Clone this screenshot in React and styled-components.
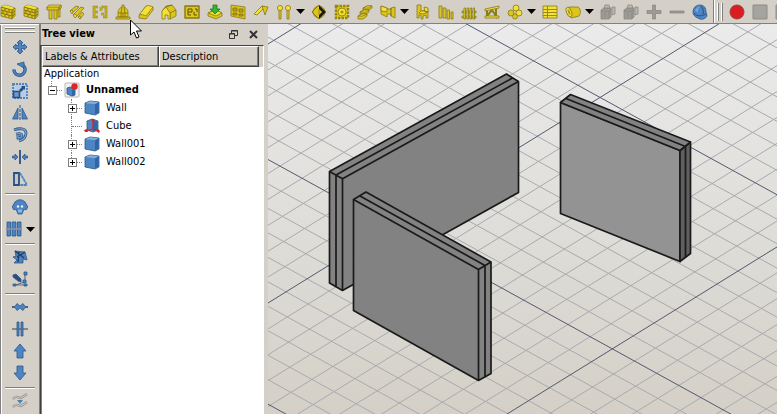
import React, { useState } from "react";
import styled, { createGlobalStyle } from "styled-components";

const GlobalStyle = createGlobalStyle`
  * {
    box-sizing: border-box;
  }

  body {
    margin: 0;
    background: #d4d0c8;
    color: #000;
    font-family: "DejaVu Sans Condensed", "DejaVu Sans", sans-serif;
    font-size: 11px;
    line-height: 14px;
  }
`;

const Y = { fill: "#dfc51a", stroke: "#85781c", strokeWidth: 0.8, strokeLinejoin: "round" };
const L = { fill: "#f4e134", stroke: "#85781c", strokeWidth: 0.8, strokeLinejoin: "round" };
const B = { fill: "#4c84c4", stroke: "#2f5687", strokeWidth: 0.8, strokeLinejoin: "round" };
const G = { fill: "#9d9b95", stroke: "#8b8984", strokeWidth: 0.8, strokeLinejoin: "round" };

const bricks = (
  <>
    <path {...Y} d="M1 3l4-2 10 3v8l-3 3-11-3z" />
    <path fill="#f4e134" d="M1 3l4-2 10 3-3 2z" />
    <path fill="#c4ab12" d="M12 6l3-2v8l-3 3z" />
    <path fill="none" stroke="#7b6e12" strokeWidth="0.9" d="M1 3l11 3v9M12 6l3-2M1 6l11 3 3-2M1 9l11 3 3-2M5 4v3M9 5v3M3 6.500v3M7 8v3M5 10v3M9 11v3" />
  </>
);

const machine = (
  <>
    <path {...G} d="M1 6l3-2h7v9l-2 2H1z" />
    <path {...G} fill="#b9b7b0" d="M4 4l1-3h4l1 3zM12 3h3v7l-3 1z" />
    <path {...G} fill="none" d="M1 7h8v7M9 7l2-2M5 8v5" />
  </>
);

// all drawings sit on a 16x16 board
const drawings = {
  bricks,
  structure: (
    <>
      <path {...Y} d="M3 5h3v10H3zM8 5h3v10H8zM12 4h2v9h-2z" />
      <path {...L} d="M1 3l2-2h12v3l-2 1H1z" />
      <path {...Y} d="M1 3h12v3H1zM13 3l2-2v3l-2 2z" />
    </>
  ),
  rebar: (
    <>
      <path {...Y} d="M1 7l6-5 3 1-7 6zM4 11l8-8 3 1-8 9zM9 13l4-5 2 2-4 5z" />
      <path {...L} d="M1 7l2-1 1 2-1 2zM4 11l2-1 2 2-2 2zM9 13l2-1 1 2-1 1z" />
    </>
  ),
  floor: (
    <>
      <path fill="none" stroke="#8b7d1c" strokeWidth="2.600" d="M6 3H2v10h4M2 8h4M9 3h5v10h-3M9 3v4M9 10h3" />
      <path fill="none" stroke="#dfc51a" strokeWidth="1.200" d="M6 3H2v10h4M2 8h4M9 3h5v10h-3M9 3v4M9 10h3" />
    </>
  ),
  building: (
    <>
      <path {...Y} d="M1 13h14v2H1zM3 9c0-4 2-5 4-6V1h2v2c2 1 4 2 4 6v4H3z" />
      <path stroke="#7b6e12" fill="none" strokeWidth="0.800" d="M3 9h10M6 13V9l1-6M10 13V9L9 3M8 9v4" />
    </>
  ),
  slab: (
    <>
      <path {...Y} d="M1 12l7-10 7 1v3l-7 9-7-1z" />
      <path {...L} d="M1 11l7-9c2-1 5 0 7 1l-7 9c-2-1-5-2-7-1z" />
    </>
  ),
  house: (
    <>
      <path {...Y} d="M1 7l4-5 6-1 4 5v6l-6 3V9L5 4z" />
      <path {...L} d="M1 7l4-4 4 6v6H7v-4H4v4H1z" />
      <path stroke="#7b6e12" fill="none" strokeWidth="0.800" d="M5 3l6-2M9 9l6-3" />
    </>
  ),
  plan: (
    <>
      <path {...Y} d="M1 2h14v12H1z" strokeWidth="1.400" />
      <path stroke="#5c5108" fill="none" d="M4 5h4M4 8h4M4 5v6h3M8 5v3M10 8v3h3M11 5h2v3" />
    </>
  ),
  importBox: (
    <>
      <path {...Y} d="M1 9l4-2h6l4 2v3l-6 3-8-3z" />
      <path {...L} d="M1 9l5-2h5l4 2-6 3z" />
      <path fill="#38b530" stroke="#1d7a18" strokeWidth="0.800" d="M6 1h4v4h3L8 10 3 5h3z" />
    </>
  ),
  panelWall: (
    <>
      <path {...Y} d="M1 1l14 2v12L1 12z" />
      <path stroke="#7b6e12" strokeWidth="0.800" fill="#b9a51c" d="M3 4h4v3H3zM9 5h4v3H9zM3 9h4v2H3zM9 10h4v2H9z" />
    </>
  ),
  roof: (
    <>
      <path {...L} d="M1 10l8-8 3 1-8 8z" />
      <path {...Y} d="M9 2l6 1-3 8-2-6z" />
    </>
  ),
  pins: (
    <>
      <path {...Y} d="M3 6h2v9H3zM11 6h2v9h-2z" />
      <circle {...L} cx="4" cy="4" r="2.600" />
      <circle {...L} cx="12" cy="4" r="2.600" />
    </>
  ),
  section: (
    <>
      <circle {...Y} cx="8" cy="8" r="6" />
      <path fill="#1c1a08" d="M8 1l7 7-7 7z" />
      <path {...Y} d="M8 5l3 3-3 3z" />
      <path fill="none" stroke="#7b6e12" strokeWidth="0.800" d="M8 1L1 8l7 7" />
    </>
  ),
  gear: (
    <>
      <rect x="2" y="2" width="12" height="12" fill="#e3cb14" stroke="#93841c" strokeWidth="2.500" strokeDasharray="2.500 1" />
      <circle cx="8" cy="8" r="4" {...L} />
      <circle cx="8" cy="8" r="1.500" fill="#a38f08" />
    </>
  ),
  stairs: (
    <>
      <path {...Y} d="M1 12l4-2h5v2l-4 3H1zM3 8l4-2h5v2l-3 2H3zM6 4l4-2h5v2l-3 2H6z" />
      <path {...L} d="M1 12l4-2h5l-4 2zM3 8l4-2h5l-3 2zM6 4l4-2h5l-3 2z" />
    </>
  ),
  panel: (
    <>
      <path {...Y} d="M1 2l6 2v1h4V4l4-1v11l-4-2v-2H7v3l-6-3z" />
      <path {...L} d="M1 2l6 2v4L1 7z" />
      <path stroke="#7b6e12" d="M11 4v8" />
    </>
  ),
  chair: (
    <>
      <path {...Y} d="M2 1h4v6l7-1v8h-2v-3l-3 1v3H6v-4H4v3H2z" />
      <path {...L} d="M6 7h4l3 1-5 2-4-1zM9 3l4 1v4h-3z" />
    </>
  ),
  columns: (
    <path {...Y} d="M1 2h3v12H1zM5 4h3v10H5zM9 6h2.500v9H9zM13 8h2v7h-2z" />
  ),
  fence: (
    <>
      <path {...Y} d="M1 7h14v2H1zM1 12h14v2H1z" />
      <path {...L} d="M3 4h1.500v11H3zM6 4h1.500v11H6zM9 4h1.500v11H9zM12 4h1.500v11H12z" />
    </>
  ),
  truss: (
    <>
      <path fill="none" stroke="#8b7d1c" strokeWidth="2" d="M3 6v6l5-6 4 6V4" />
      <path {...L} d="M1 5l14-3v2L1 7zM1 12h14v2H1z" />
    </>
  ),
  balls: (
    <>
      <circle {...L} cx="9" cy="4" r="3" />
      <circle {...Y} cx="4" cy="9" r="3" />
      <circle {...L} cx="12" cy="9" r="3" />
      <circle {...Y} cx="8" cy="12.500" r="2.500" />
    </>
  ),
  table: (
    <>
      <path {...L} d="M1 2h14v12H1z" />
      <path stroke="#9b8a1a" fill="none" d="M1 5.500h14M1 8.500h14M1 11.500h14M5.500 2v12" />
    </>
  ),
  pipe: (
    <>
      <path {...Y} d="M4 3l9 0c3 2 3 6 1 9l-8 2z" />
      <ellipse {...L} cx="4" cy="8" rx="2.500" ry="5" transform="rotate(-20 4 8)" />
      <ellipse fill="#a99718" cx="4" cy="8" rx="1" ry="3" transform="rotate(-20 4 8)" />
    </>
  ),
  machine,
  plus: <path {...G} d="M6.500 1h3v5.500H15v3H9.500V15h-3V9.500H1v-3h5.500z" />,
  minus: <path {...G} d="M1 7h14v2H1z" />,
  helmet: (
    <>
      <path {...B} d="M1 8c0-4 3-7 7-7s6 3 6 7l1 4c-1 2-4 4-7 3s-7-3-7-7z" />
      <path fill="#78a6da" d="M3 7c1-3 3-5 5-5-2 2-2 4-2 6z" />
      <path fill="none" stroke="#2a4f80" d="M2 9c3 4 8 3 12 1M9 2c2 2 3 5 2 8" />
    </>
  ),
  record: <circle cx="8" cy="8" r="7" fill="#db1c20" stroke="#99423e" />,
  stop: <path fill="#a5a49f" stroke="#8e8c87" d="M1 1h14v14H1z" />,
  move: <path {...B} d="M8 1l3 3H9.500v2.500H12V5l3 3-3 3V9.500H9.500V12H11l-3 3-3-3h1.500V9.500H4V11L1 8l3-3v1.500h2.500V4H5z" />,
  rotate: (
    <>
      <path fill="none" stroke="#2f5687" strokeWidth="3.400" d="M2 8.500a5.500 5.500 0 1 0 8-4.700" />
      <path fill="none" stroke="#4c84c4" strokeWidth="1.800" d="M2 8.500a5.500 5.500 0 1 0 8-4.700" />
      <path {...B} d="M5 3l7-2v6z" />
    </>
  ),
  scale: (
    <>
      <path fill="#b9cbe0" stroke="#4c84c4" strokeWidth="1.800" strokeDasharray="2 1" d="M1 1h14v14H1z" />
      <path fill="#6b9bd2" stroke="#2a4f80" strokeWidth="1.600" d="M1.500 8.500h6v6h-6z" />
      <path fill="#2a4f80" d="M9 3h4v4l-1-1-3 3-2-2 3-3z" />
    </>
  ),
  mirror: (
    <>
      <path {...B} d="M6 3v11H0.500zM10 3v11h5.500z" />
      <path stroke="#3b76bb" strokeWidth="1.400" strokeDasharray="3 1" d="M8 0v16" />
    </>
  ),
  offset: (
    <>
      <path fill="none" stroke="#2f5687" strokeWidth="2.800" d="M2 3c5-2 12-2 12 3 0 4-3 7-7 8M4 7c4-1 6 0 6 1.500S8 11 6 11V8" />
      <path fill="none" stroke="#78a6da" strokeWidth="1.200" d="M2 3c5-2 12-2 12 3 0 4-3 7-7 8M4 7c4-1 6 0 6 1.500S8 11 6 11V8" />
    </>
  ),
  trim: (
    <>
      <path stroke="#2a4f80" strokeWidth="1.800" d="M8 1v14" />
      <path {...B} d="M0.500 7H3V5l3 3-3 3V9H0.500zM15.500 7H13V5l-3 3 3 3V9h2.500z" />
    </>
  ),
  stretch: (
    <>
      <path fill="#c3c8cc" stroke="#2a4f80" strokeWidth="1.800" d="M2 2h5v12H2z" />
      <path fill="none" stroke="#4c84c4" strokeWidth="1.800" strokeDasharray="3 0.500" d="M8 2l7 12H8" />
    </>
  ),
  sheep: (
    <>
      <path {...B} d="M3 3c3-3 7-3 10 0l3 5-2 3-2-1-2 5H6l-2-5-2 1-2-3z" />
      <circle cx="6" cy="7.500" r="1.200" fill="#e9f1fa" />
      <circle cx="10" cy="7.500" r="1.200" fill="#e9f1fa" />
      <path fill="#8cb5e4" d="M6 10.500h4v3H6z" />
    </>
  ),
  array: (
    <>
      <path {...B} d="M1 1h3.500v14H1zM6 1h4v14H6zM11.500 1H15v14h-3.500z" />
      <path stroke="#8c949c" strokeWidth="1.600" d="M0 8h16" />
    </>
  ),
  edit: (
    <>
      <path {...B} d="M3 2l10 1 2 8-4-1 0 4H2l3-3-4-3 3-1z" />
      <path stroke="#22405f" strokeWidth="1.400" d="M3 2l9 7M5 8l8-5M7 3L6 13" />
    </>
  ),
  sketch: (
    <>
      <path fill="none" stroke="#5f7388" strokeWidth="1.200" d="M13 3v8M13 11L3 14h11" />
      <path {...B} fill="#2e4f78" d="M1 4l3-1 5 5v3l-3-1-5-4z" />
      <path {...B} d="M12 1h3v3h-3zM11 9h3v3h-3zM1 13h3v2H1zM12 13h3v2h-3z" />
    </>
  ),
  join: <path {...B} d="M0 7.500h3l2-3 3 2.500 3-2.500 2 3h3v1h-3l-2 3L8 9l-3 2.500-2-3H0z" />,
  split: (
    <>
      <path stroke="#7a8087" strokeWidth="1.800" d="M0 8h16" />
      <path {...B} d="M5 1h2v14H5zM9 1h2v14H9z" />
    </>
  ),
  up: <path {...B} d="M8 1l6 7h-3v7H5V8H2z" />,
  down: <path {...B} d="M8 15L2 8h3V1h6v7h3z" />,
  wire: (
    <>
      <path fill="none" stroke="#8b8a86" strokeWidth="2.400" d="M1 6c4-5 6 0 8-1l6-4M1 14c4-5 6 0 8-1l6-4" />
      <path fill="none" stroke="#c4c2bb" strokeWidth="1.200" d="M1 6c4-5 6 0 8-1l6-4M1 14c4-5 6 0 8-1l6-4" />
      <path fill="#517fb5" d="M5 7h6l-3 4z" />
    </>
  ),
  document: (
    <>
      <rect x="1" y="1" width="14" height="14" rx="1" fill="#f2f2f2" stroke="#b5b5b5" />
      <path {...B} d="M3 6l3-1 5 2v6l-3 1-5-2z" />
      <path fill="#2f66a8" d="M8 8l3-1v6l-3 1z" />
      <circle cx="10.500" cy="4.500" r="3.200" fill="#df2626" />
    </>
  ),
  wall: (
    <>
      <path {...B} d="M1 3l5-2 9 1v11l-4 2-10-2z" />
      <path fill="#86b0de" d="M1.500 3.300l4.500-2 8.500 1-3.500 1.700z" />
      <path fill="#2f66a8" d="M11 4.500l3.500-2v10l-3.500 2z" />
    </>
  ),
  cube: (
    <>
      <path {...B} d="M3 3l5-2 6 2v9l-5 2-6-2z" />
      <path fill="#2f66a8" d="M9 4l4.500-1v9L9 13.500z" />
      <path fill="none" stroke="#d8222a" strokeWidth="1.300" d="M9 3v8l-7 2M9 11l5 2" />
      <path fill="#d8222a" d="M8 1h2.500v3H8zM0 12l3-1 1 3H1zM12 13l2-2 2 2-1 2z" />
    </>
  ),
};

const topTools = [
  ["bricks", "Wall"],
  ["bricks", "Curtain wall"],
  ["structure", "Structure"],
  ["rebar", "Rebar"],
  ["floor", "Floor"],
  ["building", "Building"],
  ["slab", "Project"],
  ["house", "Site"],
  ["plan", "Window"],
  ["importBox", "Import"],
  ["panelWall", "Schedule wall"],
  ["roof", "Roof"],
  ["pins", "Axis", true],
  ["section", "Section plane"],
  ["gear", "Space"],
  ["stairs", "Stairs"],
  ["panel", "Panel", true],
  ["chair", "Equipment"],
  ["columns", "Frame"],
  ["fence", "Fence"],
  ["truss", "Truss"],
  ["balls", "Material", true],
  ["table", "Schedule"],
  ["pipe", "Pipe", true],
  ["machine", "Cut plane"],
  ["machine", "Cut line"],
  ["plus", "Add"],
  ["minus", "Remove"],
  ["helmet", "Survey"],
];

const macroTools = [
  ["record", "Record macro"],
  ["stop", "Stop macro"],
  ["stop", "Macros"],
];

const sideTools = [
  [
    ["move", "Move"],
    ["rotate", "Rotate"],
    ["scale", "Scale"],
    ["mirror", "Mirror"],
    ["offset", "Offset"],
    ["trim", "Trimex"],
    ["stretch", "Stretch"],
  ],
  [
    ["sheep", "Clone"],
    ["array", "Array", true],
  ],
  [
    ["edit", "Edit"],
    ["sketch", "Draft to sketch"],
  ],
  [
    ["join", "Join"],
    ["split", "Split"],
    ["up", "Upgrade"],
    ["down", "Downgrade"],
  ],
  [["wire", "Wire to B-spline"]],
];

const children = [
  { name: "Wall", icon: "wall", branch: true },
  { name: "Cube", icon: "cube" },
  { name: "Wall001", icon: "wall", branch: true },
  { name: "Wall002", icon: "wall", branch: true },
];

function Icon({ name }) {
  return (
    <Drawing viewBox="0 0 16 16" aria-hidden="true">
      {drawings[name]}
    </Drawing>
  );
}

function Tool({ icon, label, menu }) {
  return (
    <ToolGroup>
      <ToolButton aria-label={label}>
        <Icon name={icon} />
      </ToolButton>
      {menu && (
        <MenuButton aria-label={`${label} menu`}>
          <svg width="9" height="5" viewBox="0 0 9 5">
            <path d="M0 0h9L4.500 5z" />
          </svg>
        </MenuButton>
      )}
    </ToolGroup>
  );
}

function Grid() {
  const minor = [];
  const major = [];
  for (let i = -60; i <= 80; i++) {
    const down = 135.5 + i * 24.47;
    const up = 20 + i * 25.9;
    const lines = i % 10 === 0 ? major : minor;
    lines.push(
      <line key={`d${i}`} x1="0" y1={down} x2="2000" y2={down + 1100} />,
      <line key={`u${i}`} x1="0" y1={up} x2="2000" y2={up - 1238} />
    );
  }
  return (
    <>
      <g stroke="#aaa9ad">{minor}</g>
      <g stroke="#55576e">{major}</g>
    </>
  );
}

function Scene() {
  return (
    <Canvas role="img" aria-label="Three walls on a grid">
      <Grid />
      <g fill="#828282" stroke="#1a1a1a" strokeWidth="1.700" strokeLinejoin="round">
        <path d="M61.500 147.500L238.500 50l12 7.500v111l-176 98-13-7.500z" />
        <path fill="none" d="M61.500 147.500l13 7.300 176-97.300M68 151l176.500-97M68 151v111.500M74.500 154.800v111.700" />

        <path fill="#939393" d="M292.500 78.500l119.500 48v111l-119.500-48z" />
        <path fill="#5f5f5f" d="M412 126.500l10.500-8.500v111.500l-10.500 8z" />
        <path d="M292.500 78.500l10-8 120 47.500-10.500 8.500z" />
        <path fill="none" d="M298 74.500l119.500 48v111" />

        <path d="M85.500 175.500L98 168l125 70v111.500l-12.500 7-125-70z" />
        <path fill="none" d="M85.500 175.500l125 70 12.500-7.500M92 172l125 69.500V353M210.500 245.500v111" />
      </g>
    </Canvas>
  );
}

export default function App() {
  const [selected, setSelected] = useState(undefined);

  return (
    <>
      <GlobalStyle />
      <Window>
        <TopBar>
          <TopSection>
            {topTools.map(([icon, label, menu]) => (
              <Tool key={label} icon={icon} label={label} menu={menu} />
            ))}
          </TopSection>
          <MacroSection>
            <Handle $vertical />
            {macroTools.map(([icon, label]) => (
              <Tool key={label} icon={icon} label={label} />
            ))}
          </MacroSection>
        </TopBar>

        <Workspace>
          <SideBar>
            <Handle />
            {sideTools.map((group, index) => (
              <SideGroup key={index}>
                {group.map(([icon, label, menu]) => (
                  <Tool key={label} icon={icon} label={label} menu={menu} />
                ))}
              </SideGroup>
            ))}
          </SideBar>

          <Dock>
            <DockTitle>
              <h2>Tree view</h2>
              <DockButton aria-label="Float">
                <svg width="9" height="9" viewBox="0 0 9 9" fill="none" stroke="#333">
                  <path d="M2.500 3V.500h6v5H6M2.500 1h6M.500 3.500h5v5h-5zM.500 4h5" />
                </svg>
              </DockButton>
              <DockButton aria-label="Close">
                <svg width="9" height="9" viewBox="0 0 9 9" stroke="#333" strokeWidth="2">
                  <path d="M1 1l7 7M8 1L1 8" />
                </svg>
              </DockButton>
            </DockTitle>
            <TreeFrame>
              <Tree>
                <colgroup>
                  <LabelCol />
                  <DescriptionCol />
                  <col />
                </colgroup>
                <thead>
                  <tr>
                    <HeadCell scope="col">Labels &amp; Attributes</HeadCell>
                    <HeadCell scope="col">Description</HeadCell>
                    <HeadRest />
                  </tr>
                </thead>
                <tbody>
                  <tr>
                    <RootCell colSpan={3}>Application</RootCell>
                  </tr>
                  <tr>
                    <Cell colSpan={3}>
                      <Item>
                        <Branch $last>
                          <Expander aria-label="Collapse Unnamed" $open />
                        </Branch>
                        <Icon name="document" />
                        <ItemName $bold>Unnamed</ItemName>
                      </Item>
                    </Cell>
                  </tr>
                  {children.map((child, index) => (
                    <tr key={child.name} onClick={() => setSelected(index)}>
                      <Cell colSpan={3}>
                        <Item $nested>
                          <Branch $last={index === children.length - 1}>
                            {child.branch && <Expander aria-label={`Expand ${child.name}`} />}
                          </Branch>
                          <Icon name={child.icon} />
                          <ItemName $selected={index === selected}>{child.name}</ItemName>
                        </Item>
                      </Cell>
                    </tr>
                  ))}
                </tbody>
              </Tree>
            </TreeFrame>
          </Dock>

          <Viewport>
            <Scene />
          </Viewport>
        </Workspace>

        <Pointer viewBox="0 0 12 20" aria-hidden="true">
          <path d="M.500 1v15l3.500-3 2.500 6 2.500-1-2.500-6h5z" fill="#fff" stroke="#000" />
        </Pointer>
      </Window>
    </>
  );
}

const Window = styled.div`
  position: relative;
  min-height: 100vh;
  display: flex;
  flex-direction: column;
  overflow: hidden;
`;

const Drawing = styled.svg`
  display: block;
  flex: none;
  width: 16px;
  height: 16px;
`;

const TopBar = styled.div`
  display: flex;
  flex: none;
  height: 24px;
  overflow: hidden;
  border-bottom: 1px solid #808080;
`;

const TopSection = styled.div`
  display: flex;
  flex: none;
  align-items: center;
  gap: 7px;
  padding-right: 5px;
`;

const MacroSection = styled(TopSection)`
  border-left: 1px solid #808080;
  box-shadow: inset 1px 0 #fff;
  padding-left: 3px;
`;

const Handle = styled.div`
  flex: none;
  width: ${(props) => (props.$vertical ? "5px" : "30px")};
  height: ${(props) => (props.$vertical ? "18px" : "5px")};
  border: solid #fff;
  border-width: ${(props) => (props.$vertical ? "0 1px" : "1px 0")};
  box-shadow: ${(props) => (props.$vertical ? "1px 0 #808080, inset 1px 0 #808080" : "0 1px #808080, inset 0 1px #808080")};
`;

const ToolGroup = styled.div`
  display: flex;
  flex: none;
  align-items: center;
  gap: 4px;
`;

const ToolButton = styled.button`
  flex: none;
  padding: 0;
  border: 0;
  background: none;
`;

const MenuButton = styled(ToolButton)`
  width: 9px;
  margin-right: -1px;

  svg {
    display: block;
  }
`;

const Workspace = styled.div`
  display: flex;
  flex: 1;
`;

const SideBar = styled.div`
  display: flex;
  flex: none;
  flex-direction: column;
  align-items: center;
  width: 40px;
  padding-top: 3px;
  border: solid #808080;
  border-width: 0 1px 0 0;
  box-shadow: inset 0 1px #fff, inset 1px 0 #808080, inset 2px 0 #fff;

  ${Handle} {
    margin-bottom: 4px;
  }
`;

const SideGroup = styled.div`
  width: 30px;

  & + & {
    margin-top: 3px;
    padding-top: 1px;
    border-top: 1px solid #808080;
    box-shadow: inset 0 1px #fff;
  }

  ${ToolGroup} {
    justify-content: center;
    height: 22px;
  }

  & + & ${ToolGroup}:first-child {
    margin-top: 1px;
  }
`;

const Dock = styled.section`
  display: flex;
  flex: none;
  flex-direction: column;
  width: 228px;
  padding-right: 4px;
`;

const DockTitle = styled.header`
  display: flex;
  align-items: center;
  gap: 11px;
  height: 21px;
  padding: 0 6px 1px 1px;
  border-left: 1px solid #808080;

  h2 {
    flex: 1;
    margin: 0;
    font-size: 11px;
    font-weight: bold;
  }
`;

const DockButton = styled.button`
  padding: 0;
  border: 0;
  background: none;

  svg {
    display: block;
  }
`;

const TreeFrame = styled.div`
  flex: 1;
  border: 1px solid #404040;
  border-right-color: #fff;
  border-bottom: 0;
  background: #fff;
  box-shadow: inset 1px 0 #808080;
  padding-left: 1px;
`;

const Tree = styled.table`
  width: 100%;
  table-layout: fixed;
  border-collapse: separate;
  border-spacing: 0;
`;

const LabelCol = styled.col`
  width: 117px;
`;

const DescriptionCol = styled.col`
  width: 100px;
`;

const HeadCell = styled.th`
  height: 21px;
  padding: 1px 2px 0;
  background: #d4d0c8;
  border: 1px solid #fff;
  border-right-color: #404040;
  border-bottom-color: #404040;
  box-shadow: inset -1px -1px #808080;
  font-weight: normal;
  text-align: left;
  white-space: nowrap;
`;

const HeadRest = styled.td`
  padding: 0;
  background: #d4d0c8;
`;

const Cell = styled.td`
  padding: 0;
`;

const RootCell = styled.td`
  padding: 0 2px;
`;

const Item = styled.div`
  display: flex;
  align-items: center;
  gap: 2px;
  height: 18px;
  padding-left: ${(props) => (props.$nested ? "20px" : "0")};
`;

/* dotted guides run behind the expander box */
const Branch = styled.span`
  position: relative;
  display: grid;
  place-items: center;
  flex: none;
  width: 20px;
  height: 18px;

  &::before {
    content: "";
    position: absolute;
    left: 9px;
    top: 0;
    height: ${(props) => (props.$last ? "9px" : "18px")};
    border-left: 1px dotted #808080;
  }

  &::after {
    content: "";
    position: absolute;
    left: 10px;
    top: 9px;
    width: 10px;
    border-top: 1px dotted #808080;
  }
`;

const Expander = styled.button`
  position: relative;
  z-index: 1;
  width: 9px;
  height: 9px;
  padding: 0;
  border: 1px solid #808080;
  background: ${(props) =>
    props.$open
      ? "linear-gradient(#000, #000) center / 5px 1px no-repeat #fff"
      : "linear-gradient(#000, #000) center / 5px 1px no-repeat, linear-gradient(#000, #000) center / 1px 5px no-repeat #fff"};
`;

const ItemName = styled.span`
  padding: 0 4px;
  font-weight: ${(props) => (props.$bold ? "bold" : "normal")};
  background: ${(props) => (props.$selected ? "#c2d5ea" : "none")};
`;

const Viewport = styled.main`
  display: grid;
  flex: 1;
  min-width: 0;
  background: linear-gradient(#ebebeb, #dfdeda 50%, #d4d0c7);
`;

const Canvas = styled.svg`
  width: 100%;
  height: 100%;
`;

const Pointer = styled.svg`
  position: absolute;
  left: 130px;
  top: 19px;
  width: 12px;
  height: 20px;
`;
